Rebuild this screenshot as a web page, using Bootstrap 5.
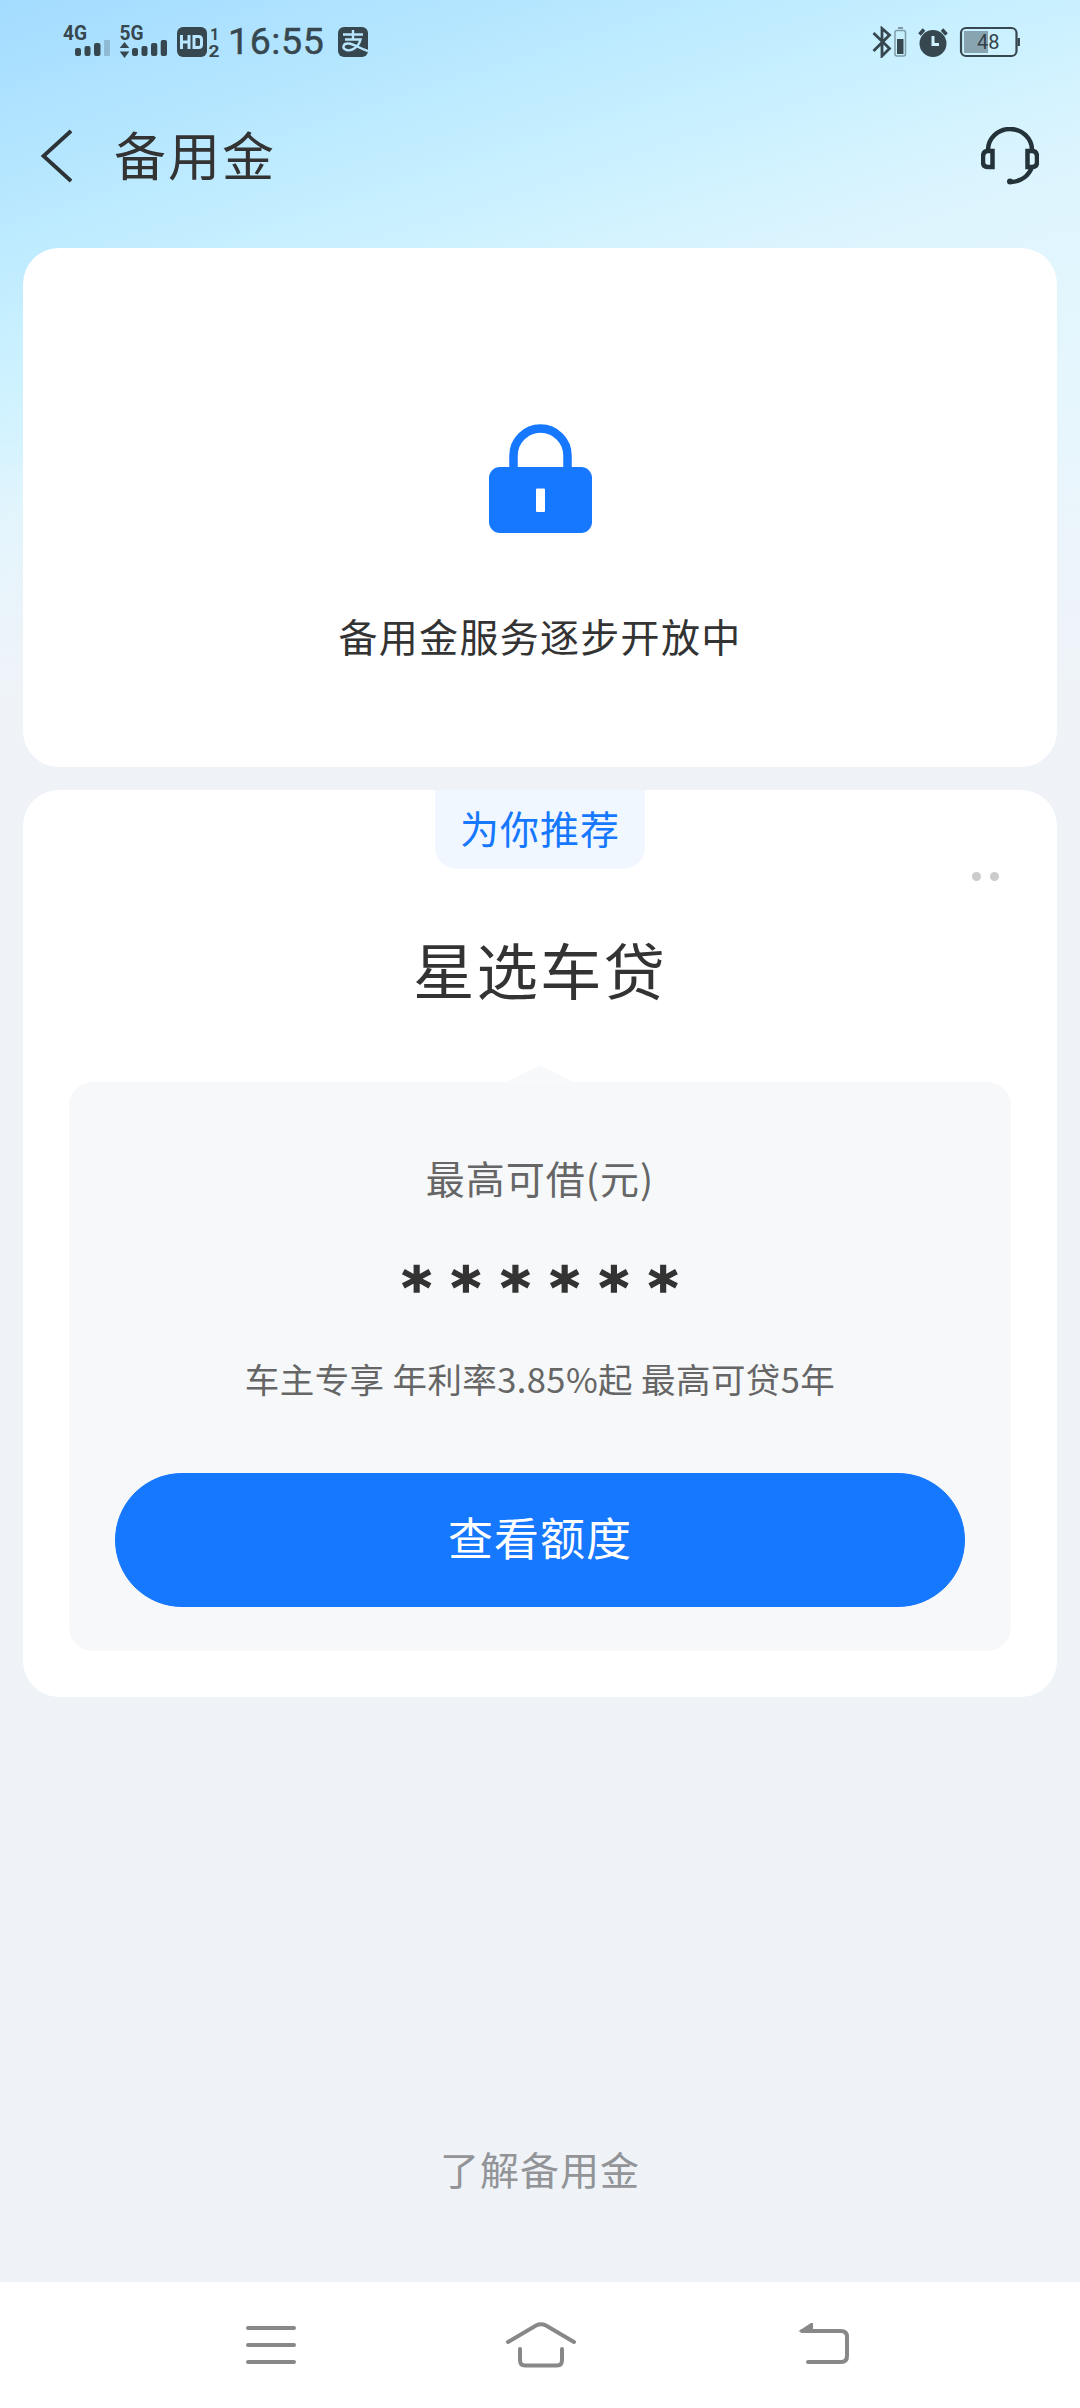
<!DOCTYPE html>
<html lang="zh-CN">
<head>
<meta charset="utf-8">
<meta name="viewport" content="width=device-width, initial-scale=1">
<title>备用金</title>
<link rel="stylesheet" href="https://cdn.jsdelivr.net/npm/bootstrap@5.3.0/dist/css/bootstrap.min.css">
<style>
  body { font-family: "Noto Sans CJK SC", sans-serif; background: #eff3f8; color: #333; line-height: 1; }
  svg { display: block; flex: none; }
  .screen { height: 2408px; background: linear-gradient(180deg, rgba(239,243,248,0) 440px, #eff3f8 710px), linear-gradient(162deg, #a3dcff 0, #b3e5ff 150px, #c8f0ff 320px, #def5fe 500px, #e6f6fd 700px, #eaf5fb 900px) no-repeat 0 0 / 100% 740px; }
  .status { height: 84px; padding: 0 60px 0 61px; color: #37474f; }
  .clock { font: 400 37.500px/1 Roboto, sans-serif; -webkit-text-stroke: .5px currentColor; letter-spacing: .6px; margin: 0 14px 0 7px; }
  .topbar { height: 144px; margin-bottom: 20px; padding: 0 41px 0 40px; }
  .page-title { font-size: 52px; letter-spacing: 2px; margin-left: 42px; padding-bottom: 5px; }
  .panel { border: 0; border-radius: 36px; margin: 0 23px; }
  .lock-panel { height: 519px; padding-top: 176px; margin-bottom: 23px; }
  .lock-text { font-size: 39px; letter-spacing: 1.3px; margin-top: 83px; }
  .offer { height: 907px; }
  .ribbon { width: 210px; height: 79px; padding-bottom: 4px; border-radius: 0 0 22px 22px; background: #f0f7ff; color: #1677ff; font-size: 39px; letter-spacing: 1px; }
  .more { top: 82px; right: 58px; gap: 9px; }
  .more i { width: 9px; height: 9px; border-radius: 50%; background: #ccc; }
  .offer-name { font-size: 61.500px; letter-spacing: 2px; margin-top: 69px; }
  .quota { width: 942px; height: 569px; border-radius: 24px; background: #f6f8fa; color: #666; padding: 76px 46px 0; }
  .notch { width: 66px; height: 16px; margin-top: 66px; background: #f6f8fa; clip-path: polygon(50% 0, 100% 100%, 0 100%); }
  .quota-label { font-size: 39px; letter-spacing: 1px; }
  .masked { font: bold 57px/54px "DejaVu Sans", sans-serif; -webkit-text-stroke: 1.400px #333; letter-spacing: 19.500px; margin: 64px -19.500px 46px 0; color: #333; }
  .quota-desc { font-size: 34.500px; letter-spacing: .4px; line-height: 34px; margin-bottom: 78px; white-space: nowrap; }
  .cta { --bs-btn-bg: #1677ff; --bs-btn-border-color: #1677ff; height: 134px; padding: 0 0 6px; font-size: 45px; letter-spacing: 1px; line-height: 1; }
  .about { font-size: 39px; letter-spacing: 1px; color: #929497; margin-bottom: 94px; }
  .sysnav { height: 126px; padding: 0 229px 0 244px; }
  .nav-home { margin-right: 14px; }
</style>
<script src="https://cdn.jsdelivr.net/npm/bootstrap@5.3.0/dist/js/bootstrap.bundle.min.js"></script>
</head>
<body>
<div class="screen d-flex flex-column">
  <div class="status d-flex justify-content-between align-items-center">
    <div class="d-flex align-items-center">
      <svg width="160" height="52" viewBox="61 16 160 52" fill="currentColor" font-family="Roboto, sans-serif" font-weight="700">
        <text x="63" y="39.500" font-size="20" textLength="24" lengthAdjust="spacingAndGlyphs">4G</text>
        <rect x="75" y="48" width="6" height="8" rx="2"/><rect x="84.500" y="46" width="6" height="10" rx="2"/><rect x="94" y="43" width="6.500" height="13" rx="2"/><rect x="104" y="40" width="6" height="16" rx="1" opacity=".25"/>
        <text x="119.500" y="39.500" font-size="20" textLength="24" lengthAdjust="spacingAndGlyphs">5G</text>
        <path d="M124.500 42l4.800 6h-9.600zM124.500 58l4.800-6.500h-9.600z"/>
        <rect x="132" y="48" width="6" height="8" rx="2"/><rect x="141.500" y="46" width="6" height="10" rx="2"/><rect x="151" y="43" width="6.300" height="13" rx="2"/><rect x="160.700" y="40" width="6.300" height="16" rx="2"/>
        <rect x="177" y="27" width="30" height="30" rx="6"/>
        <path d="M181.500 35v14M189 35v14M181.500 42h7.500M194 36.500h4.500q3 0 3 3v5q0 3-3 3H194z" fill="none" stroke="#b8e6ff" stroke-width="3"/>
        <text x="210" y="39.500" font-size="16">1</text>
        <text x="208.500" y="56.500" font-size="16" textLength="11" lengthAdjust="spacingAndGlyphs">2</text>
      </svg>
      <div class="clock">16:55</div>
      <svg width="30" height="30" viewBox="0 0 30 30">
        <rect width="30" height="30" rx="6" fill="currentColor"/>
        <path d="M5 7.500h20M15 3v9.500M7 12.500h15.500c-2 8-9 12-14 10.500-5-1.500-3.500-7 2-6.500 6 .5 10 4.500 19.500 7.500" fill="none" stroke="#b8e6ff" stroke-width="2.400"/>
      </svg>
    </div>
    <svg width="148" height="32" viewBox="872 26 148 32" fill="none" stroke="currentColor">
      <path d="M873.500 33l16 15.500-7.500 7.500V28.500l7.500 6.500-16 16" stroke-width="2.800"/>
      <rect x="895" y="30.500" width="10.500" height="25.500" rx="2" stroke-width="1.500" opacity=".5"/>
      <path d="M898 28h5" stroke-width="2" opacity=".5"/>
      <path d="M897 39h6.500v15H897z" fill="currentColor" stroke="none"/>
      <circle cx="933" cy="43.500" r="13.500" fill="currentColor" stroke="none"/>
      <path d="M919.500 34.500l4.500-5M946.500 34.500l-4.500-5" stroke-width="3.500"/>
      <path d="M933 36v8.500h6" stroke="#cef2ff" stroke-width="3"/>
      <rect x="961" y="28" width="55.500" height="28" rx="5" stroke-width="2.200"/>
      <path d="M964 31h24v22h-24z" fill="currentColor" stroke="none" opacity=".45"/>
      <path d="M1018.700 38v8" stroke-width="2.500"/>
      <text x="977" y="49" fill="#33424a" stroke="none" font-family="Roboto, sans-serif" font-size="20">48</text>
    </svg>
  </div>

  <div class="topbar d-flex align-items-center">
    <svg width="32" height="54" viewBox="40 129 32 54" fill="none" stroke="#2b3336" stroke-width="3.800"><path d="M71 131L43.500 156 71 181"/></svg>
    <div class="page-title">备用金</div>
    <svg class="ms-auto" width="58" height="58" viewBox="982 127 58 58" fill="none" stroke="#24323a" stroke-width="4.500">
      <path d="M989 150a22 21 0 0 1 44 0M1033 167c-3 8-10 14.500-21 15"/>
      <path d="M993.500 151h-4.500q-5 0-5 6v5q0 5 5 5h4.500zM1028.500 151h4.500q5 0 5 6v5q0 5-5 5h-4.500z"/>
      <circle cx="1011" cy="181.500" r="3" fill="#24323a" stroke="none"/>
    </svg>
  </div>

  <div class="card panel lock-panel align-items-center">
    <svg width="103" height="109" viewBox="0 0 103 109">
      <path d="M24.500 46V31.500a27 27 0 0 1 54 0V46" fill="none" stroke="#1677ff" stroke-width="8.500"/>
      <rect y="43" width="103" height="66" rx="11" fill="#1677ff"/>
      <rect x="47" y="64.500" width="9" height="23.500" rx="1" fill="#fff"/>
    </svg>
    <div class="lock-text">备用金服务逐步开放中</div>
  </div>

  <div class="card panel offer align-items-center">
    <div class="ribbon d-flex justify-content-center align-items-center">为你推荐</div>
    <div class="more d-flex position-absolute"><i></i><i></i></div>
    <div class="offer-name">星选车贷</div>
    <div class="notch"></div>
    <div class="quota d-flex flex-column align-items-center">
      <div class="quota-label">最高可借(元)</div>
      <div class="masked">******</div>
      <div class="quota-desc">车主专享 年利率3.85%起 最高可贷5年</div>
      <button class="btn btn-primary cta rounded-pill w-100" type="button">查看额度</button>
    </div>
  </div>

  <div class="about text-center mt-auto">了解备用金</div>
  <div class="sysnav bg-white d-flex justify-content-between align-items-center">
    <svg width="54" height="44" viewBox="244 2323 54 44" stroke="#888" stroke-width="4" stroke-linecap="round"><path d="M248 2328h46M248 2345h46M248 2362h46"/></svg>
    <svg class="nav-home" width="72" height="46" viewBox="505 2322 72 46" fill="none" stroke="#888" stroke-width="4" stroke-linecap="round"><path d="M508 2342l28-16.500q5-2.500 10 0l28 16.500M520 2349v11q0 5.500 5 5.500h32q5 0 5-5.500v-11"/></svg>
    <svg width="53" height="44" viewBox="798 2323 53 44" fill="none" stroke="#888" stroke-width="4" stroke-linecap="round"><path d="M802 2331h39q6 0 6 6v19q0 6-6 6h-33"/><path d="M798 2331.500l13-8.500h2v8z" fill="#888" stroke="none"/></svg>
  </div>
</div>
</body>
</html>
